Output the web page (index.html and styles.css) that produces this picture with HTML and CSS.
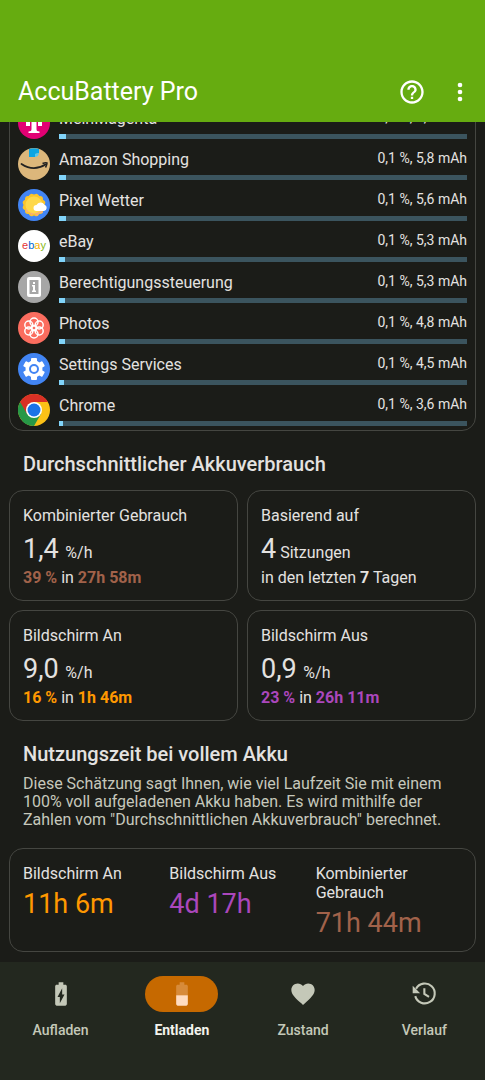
FILE: index.html
```html
<!DOCTYPE html>
<html lang="de">
<head>
    <meta charset="UTF-8">
    <meta name="viewport" content="width=device-width, initial-scale=1.0">
    <title>AccuBattery Pro</title>
    <link rel="stylesheet" href="styles.css">
</head>
<body>
    <header class="app-bar">
        <h1>AccuBattery Pro</h1>
        <button class="icon-btn" aria-label="Hilfe">
            <svg viewBox="0 0 24 24"><path d="M11 18h2v-2h-2v2zm1-16C6.480 2 2 6.480 2 12s4.480 10 10 10 10-4.480 10-10S17.520 2 12 2zm0 18c-4.410 0-8-3.590-8-8s3.590-8 8-8 8 3.590 8 8-3.590 8-8 8zm0-14c-2.210 0-4 1.790-4 4h2c0-1.100.9-2 2-2s2 .9 2 2c0 2-3 1.750-3 5h2c0-2.250 3-2.500 3-5 0-2.210-1.790-4-4-4z"/></svg>
        </button>
        <button class="icon-btn" aria-label="Menü">
            <svg viewBox="0 0 24 24"><circle cx="12" cy="6" r="2"/><circle cx="12" cy="12" r="2"/><circle cx="12" cy="18" r="2"/></svg>
        </button>
    </header>

    <main class="content">
        <ul class="card app-list">
            <li class="app">
                <svg class="app-icon" viewBox="0 0 32 32"><circle cx="16" cy="16" r="16" fill="#e20074"/><path d="M8 5h16v7h-1.500c-.3-3.500-1.500-5-4-5V22c0 1.800.8 2.500 3 2.500V26h-11v-1.500c2.200 0 3-.7 3-2.500V7c-2.500 0-3.700 1.500-4 5H8z" fill="#fff"/><path d="M8 15h4v4H8zM20 15h4v4h-4z" fill="#fff"/></svg>
                <div class="app-info">
                    <div class="app-text"><span>MeinMagenta</span><span class="usage">0,1 %, 6,1 mAh</span></div>
                    <div class="bar"><div class="fill" style="width: 1.6%"></div></div>
                </div>
            </li>
            <li class="app">
                <svg class="app-icon" viewBox="0 0 32 32"><circle cx="16" cy="16" r="16" fill="#dcb77b"/><path d="M11 1q5-1.500 10 0v4l-4 1v3h-6z" fill="#0ca5e2"/><path d="M17 6l4-1-1 3-3 1z" fill="#53c8f2"/><path d="M3.500 16q12 8 24 .5" fill="none" stroke="#222" stroke-width="1.800" stroke-linecap="round"/><path d="M24.500 15.500q3-1.200 4.500-.5 0 2-1.500 4.500" fill="none" stroke="#222" stroke-width="1.500"/></svg>
                <div class="app-info">
                    <div class="app-text"><span>Amazon Shopping</span><span class="usage">0,1 %, 5,8 mAh</span></div>
                    <div class="bar"><div class="fill" style="width: 1.6%"></div></div>
                </div>
            </li>
            <li class="app">
                <svg class="app-icon" viewBox="0 0 32 32"><circle cx="16" cy="16" r="16" fill="#4285f4"/><g fill="#fbc52c"><rect x="7" y="7" width="18" height="18" rx="3"/><rect x="7" y="7" width="18" height="18" rx="3" transform="rotate(30 16 16)"/><rect x="7" y="7" width="18" height="18" rx="3" transform="rotate(60 16 16)"/></g><path d="M8 23l4 .5 1 3 3-2 3.500 2.500 1.500-3h4l-2-4H8z" fill="#f8ae78"/><circle cx="16" cy="16" r="8.500" fill="#fed84b"/><path d="M18.500 22a3 3 0 0 1 0-6 4.500 4.500 0 0 1 8-.2 3.200 3.200 0 0 1-.5 6.200z" fill="#fff"/></svg>
                <div class="app-info">
                    <div class="app-text"><span>Pixel Wetter</span><span class="usage">0,1 %, 5,6 mAh</span></div>
                    <div class="bar"><div class="fill" style="width: 1.6%"></div></div>
                </div>
            </li>
            <li class="app">
                <svg class="app-icon" viewBox="0 0 32 32"><circle cx="16" cy="16" r="16" fill="#fff"/><text class="ebay" x="16" y="19" text-anchor="middle"><tspan fill="#e53238">e</tspan><tspan fill="#0064d2">b</tspan><tspan fill="#f5af02">a</tspan><tspan fill="#86b817">y</tspan></text></svg>
                <div class="app-info">
                    <div class="app-text"><span>eBay</span><span class="usage">0,1 %, 5,3 mAh</span></div>
                    <div class="bar"><div class="fill" style="width: 1.5%"></div></div>
                </div>
            </li>
            <li class="app">
                <svg class="app-icon" viewBox="0 0 32 32"><circle cx="16" cy="16" r="16" fill="#a6a6a6"/><rect x="9" y="6" width="14" height="20" rx="2" fill="#fff"/><path d="M11.500 9h9v14h-9z" fill="#a6a6a6"/><path d="M15 11h2v2h-2zM14 14h3v5.500h1V21h-4v-1.500h1v-4h-1z" fill="#fff"/></svg>
                <div class="app-info">
                    <div class="app-text"><span>Berechtigungssteuerung</span><span class="usage">0,1 %, 5,3 mAh</span></div>
                    <div class="bar"><div class="fill" style="width: 1.5%"></div></div>
                </div>
            </li>
            <li class="app">
                <svg class="app-icon" viewBox="0 0 32 32"><circle cx="16" cy="16" r="16" fill="#fb6d5f"/><g fill="none" stroke="#fff" stroke-width="1.500"><circle cx="16" cy="10" r="4"/><circle cx="21.200" cy="13" r="4"/><circle cx="21.200" cy="19" r="4"/><circle cx="16" cy="22" r="4"/><circle cx="10.800" cy="19" r="4"/><circle cx="10.800" cy="13" r="4"/><circle cx="16" cy="16" r="2.500"/></g></svg>
                <div class="app-info">
                    <div class="app-text"><span>Photos</span><span class="usage">0,1 %, 4,8 mAh</span></div>
                    <div class="bar"><div class="fill" style="width: 1.4%"></div></div>
                </div>
            </li>
            <li class="app">
                <svg class="app-icon" viewBox="0 0 32 32"><circle cx="16" cy="16" r="16" fill="#4285f4"/><g fill="#fff"><rect x="13" y="5" width="6" height="22" rx="1"/><rect x="13" y="5" width="6" height="22" rx="1" transform="rotate(60 16 16)"/><rect x="13" y="5" width="6" height="22" rx="1" transform="rotate(120 16 16)"/><circle cx="16" cy="16" r="8.500"/></g><circle cx="16" cy="16" r="4" fill="#fff" stroke="#4285f4" stroke-width="2"/></svg>
                <div class="app-info">
                    <div class="app-text"><span>Settings Services</span><span class="usage">0,1 %, 4,5 mAh</span></div>
                    <div class="bar"><div class="fill" style="width: 1.3%"></div></div>
                </div>
            </li>
            <li class="app">
                <svg class="app-icon" viewBox="0 0 32 32"><circle cx="16" cy="16" r="16" fill="#fbc116"/><path d="M2.140 8A16 16 0 0 0 16 32l6.930-12L16 16z" fill="#279847"/><path d="M2.140 8a16 16 0 0 1 27.720 0H16l-6.930 12z" fill="#d93025"/><circle cx="16" cy="16" r="8" fill="#fff"/><circle cx="16" cy="16" r="6.500" fill="#1a73e8"/></svg>
                <div class="app-info">
                    <div class="app-text"><span>Chrome</span><span class="usage">0,1 %, 3,6 mAh</span></div>
                    <div class="bar"><div class="fill" style="width: 1.1%"></div></div>
                </div>
            </li>
        </ul>

        <h2>Durchschnittlicher Akkuverbrauch</h2>
        <div class="grid">
            <section class="card stat">
                <h3>Kombinierter Gebrauch</h3>
                <p class="rate"><span class="value">1,4&nbsp;</span>%/h</p>
                <p><b class="brown">39 %</b> in <b class="brown">27h 58m</b></p>
            </section>
            <section class="card stat">
                <h3>Basierend auf</h3>
                <p class="rate"><span class="value">4</span> Sitzungen</p>
                <p>in den letzten <b>7</b> Tagen</p>
            </section>
            <section class="card stat">
                <h3>Bildschirm An</h3>
                <p class="rate"><span class="value">9,0&nbsp;</span>%/h</p>
                <p><b class="orange">16 %</b> in <b class="orange">1h 46m</b></p>
            </section>
            <section class="card stat">
                <h3>Bildschirm Aus</h3>
                <p class="rate"><span class="value">0,9&nbsp;</span>%/h</p>
                <p><b class="purple">23 %</b> in <b class="purple">26h 11m</b></p>
            </section>
        </div>

        <h2>Nutzungszeit bei vollem Akku</h2>
        <p class="description">Diese Schätzung sagt Ihnen, wie viel Laufzeit Sie mit einem 100% voll aufgeladenen Akku haben. Es wird mithilfe der Zahlen vom "Durchschnittlichen Akkuverbrauch" berechnet.</p>
        <div class="card times">
            <section>
                <h3>Bildschirm An</h3>
                <p class="value orange">11h 6m</p>
            </section>
            <section>
                <h3>Bildschirm Aus</h3>
                <p class="value purple">4d 17h</p>
            </section>
            <section>
                <h3>Kombinierter Gebrauch</h3>
                <p class="value brown">71h 44m</p>
            </section>
        </div>
    </main>

    <nav class="bottom-nav">
        <a href="#aufladen">
            <span class="pill"><svg viewBox="0 0 24 24"><path d="M15.670 4H14V2h-4v2H8.330C7.600 4 7 4.600 7 5.330v15.330C7 21.400 7.600 22 8.330 22h7.330c.74 0 1.340-.6 1.340-1.330V5.330C17 4.600 16.400 4 15.670 4zM11 20v-5.500H9L13 7v5.500h2L11 20z"/></svg></span>
            Aufladen
        </a>
        <a href="#entladen" class="active">
            <span class="pill"><svg viewBox="0 0 24 24"><path fill-opacity=".3" d="M17 5.330C17 4.600 16.400 4 15.670 4H14V2h-4v2H8.330C7.600 4 7 4.600 7 5.330V13h10z"/><path d="M7 13v7.670C7 21.400 7.600 22 8.330 22h7.330c.74 0 1.340-.6 1.340-1.330V13z"/></svg></span>
            Entladen
        </a>
        <a href="#zustand">
            <span class="pill"><svg viewBox="0 0 24 24"><path d="M12 21.350l-1.450-1.320C5.400 15.360 2 12.280 2 8.500 2 5.420 4.420 3 7.500 3c1.740 0 3.410.81 4.500 2.090C13.090 3.810 14.760 3 16.500 3 19.580 3 22 5.420 22 8.500c0 3.780-3.400 6.860-8.550 11.540z"/></svg></span>
            Zustand
        </a>
        <a href="#verlauf">
            <span class="pill"><svg viewBox="0 0 24 24"><path d="M2.300 5v6.400h6.400z"/><path d="M5.200 7.500a8.500 8.500 0 1 1-.7 6.300M12.300 7v5l4 2.400" fill="none" stroke="currentColor" stroke-width="1.800"/></svg></span>
            Verlauf
        </a>
    </nav>
</body>
</html>
```
FILE: styles.css
```css
*{
    box-sizing: border-box;
}
body{
    margin: 0;
    height: 100vh;
    display: flex;
    flex-direction: column;
    background-color: #1b1c18;
    color: #e4e2e0;
    font-family: Roboto, sans-serif;
    font-size: 16px;
    line-height: 19px;
}
h1, h2, h3, p, ul{
    margin: 0;
    padding: 0;
    font-weight: 400;
}
svg{
    display: block;
    fill: currentColor;
}
.app-bar{
    display: flex;
    align-items: center;
    padding: 62px 1px 0 18px;
    height: 122px;
    flex-shrink: 0;
    background-color: #66ac10;
    color: white;
}
.app-bar h1{
    flex: 1;
    font-size: 25px;
    line-height: 32px;
}
.icon-btn{
    display: flex;
    justify-content: center;
    width: 48px;
    padding: 0;
    border: none;
    background: none;
    color: white;
    cursor: pointer;
}
.icon-btn svg{
    width: 28px;
    height: 28px;
}
/* list is scrolled to its end */
.content{
    flex: 1;
    min-height: 0;
    overflow: hidden;
    display: flex;
    flex-direction: column;
    justify-content: flex-end;
    padding: 0 9px 10px;
}
.content > *{
    flex-shrink: 0;
}
.card{
    border: 1px solid #454641;
    border-radius: 14px;
}
.app-list{
    padding: 0 8px 4px;
    list-style: none;
}
.app{
    display: flex;
    align-items: flex-end;
    gap: 9px;
    height: 41px;
}
.app-icon{
    width: 32px;
    height: 32px;
}
.ebay{
    font-family: "Liberation Sans", sans-serif;
    font-size: 11px;
}
.app-info{
    flex: 1;
}
.app-text{
    display: flex;
    justify-content: space-between;
    margin-bottom: 6px;
}
.usage{
    font-size: 14px;
    line-height: 16px;
}
.bar{
    height: 5px;
    background-color: #3b545e;
}
.fill{
    height: 5px;
    background-color: #81d4fa;
}
h2{
    padding: 0 14px;
    font-size: 20px;
    font-weight: 500;
    line-height: 24px;
    margin-top: 21px;
}
h3{
    font-size: 16px;
}
.grid{
    display: grid;
    grid-template-columns: 1fr 1fr;
    gap: 9px;
    margin-top: 14px;
}
.stat{
    padding: 15px 13px 13px;
}
.rate{
    margin: 8px 0 3px;
}
.value{
    font-size: 27px;
    line-height: 32px;
}
b{
    font-weight: 700;
}
.brown{
    color: #a1624a;
}
.orange{
    color: #ff9800;
}
.purple{
    color: #ab47bc;
}
.description{
    padding: 0 14px;
    margin: 9px 0 19px;
    font-size: 16px;
    line-height: 18px;
    color: #c6c8bc;
}
.times{
    display: grid;
    grid-template-columns: 1fr 1fr 1fr;
    padding: 15px 13px 12px;
}
.times .value{
    margin-top: 5px;
}
.bottom-nav{
    display: flex;
    height: 118px;
    flex-shrink: 0;
    padding-top: 14px;
    background-color: #23281f;
}
.bottom-nav a{
    flex: 1;
    display: flex;
    flex-direction: column;
    align-items: center;
    gap: 9px;
    color: #c4c8b8;
    font-size: 14px;
    font-weight: 500;
    line-height: 18px;
    text-decoration: none;
}
.pill{
    display: flex;
    align-items: center;
    justify-content: center;
    width: 73px;
    height: 36px;
    border-radius: 18px;
}
.pill svg{
    width: 28px;
    height: 28px;
}
.bottom-nav .active{
    color: #f3f3ec;
    font-weight: 700;
}
.active .pill{
    background-color: #c66900;
    color: #ffdcc0;
}
```
